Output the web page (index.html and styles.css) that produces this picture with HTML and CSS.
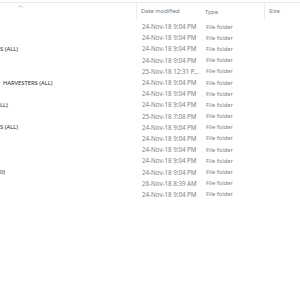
FILE: index.html
```html
<!DOCTYPE html>
<html>
<head>
<meta charset="utf-8">
<link rel="stylesheet" href="styles.css">
</head>
<body>
<div class="explorer">
  <div class="header">
    <div class="hcell name-h"><span class="sort">
      <svg width="5" height="3" viewBox="0 0 5 3"><path d="M0.5 2.6 L2.5 0.6 L4.5 2.6" fill="none" stroke="#9aa0a8" stroke-width="0.7"/></svg>
    </span></div>
    <div class="hcell sep">Date modified</div>
    <div class="hcell">Type</div>
    <div class="hcell sep">Size</div>
  </div>
  <div class="rows">
    <div class="row"><div class="name"></div><div class="date">24-Nov-18 9:04 PM</div><div class="type">File folder</div><div class="size"></div></div>
    <div class="row"><div class="name"></div><div class="date">24-Nov-18 9:04 PM</div><div class="type">File folder</div><div class="size"></div></div>
    <div class="row"><div class="name">S (ALL)</div><div class="date">24-Nov-18 9:04 PM</div><div class="type">File folder</div><div class="size"></div></div>
    <div class="row"><div class="name"></div><div class="date">24-Nov-18 9:04 PM</div><div class="type">File folder</div><div class="size"></div></div>
    <div class="row"><div class="name"></div><div class="date">25-Nov-18 12:31 P...</div><div class="type">File folder</div><div class="size"></div></div>
    <div class="row"><div class="name indent">HARVESTERS (ALL)</div><div class="date">24-Nov-18 9:04 PM</div><div class="type">File folder</div><div class="size"></div></div>
    <div class="row"><div class="name"></div><div class="date">24-Nov-18 9:04 PM</div><div class="type">File folder</div><div class="size"></div></div>
    <div class="row"><div class="name">LL)</div><div class="date">24-Nov-18 9:04 PM</div><div class="type">File folder</div><div class="size"></div></div>
    <div class="row"><div class="name"></div><div class="date">25-Nov-18 7:08 PM</div><div class="type">File folder</div><div class="size"></div></div>
    <div class="row"><div class="name">S (ALL)</div><div class="date">24-Nov-18 9:04 PM</div><div class="type">File folder</div><div class="size"></div></div>
    <div class="row"><div class="name"></div><div class="date">24-Nov-18 9:04 PM</div><div class="type">File folder</div><div class="size"></div></div>
    <div class="row"><div class="name"></div><div class="date">24-Nov-18 9:04 PM</div><div class="type">File folder</div><div class="size"></div></div>
    <div class="row"><div class="name"></div><div class="date">24-Nov-18 9:04 PM</div><div class="type">File folder</div><div class="size"></div></div>
    <div class="row"><div class="name">0)</div><div class="date">24-Nov-18 9:04 PM</div><div class="type">File folder</div><div class="size"></div></div>
    <div class="row"><div class="name"></div><div class="date">26-Nov-18 8:39 AM</div><div class="type">File folder</div><div class="size"></div></div>
    <div class="row"><div class="name"></div><div class="date">24-Nov-18 9:04 PM</div><div class="type">File folder</div><div class="size"></div></div>
  </div>
</div>
</body>
</html>
```

FILE: styles.css
```css
html, body {
  margin: 0;
  padding: 0;
  background: #ffffff;
}
.explorer {
  width: 300px;
  height: 300px;
  overflow: hidden;
  background: #ffffff;
  font-family: "Noto Sans", "Open Sans", sans-serif;
  font-size: 5.8px;
  padding-top: 2px;
  box-sizing: border-box;
}
.header {
  display: grid;
  grid-template-columns: 136px 64px 64px 36px;
  height: 19px;
  border-top: 1px solid #e6e6e6;
  box-sizing: border-box;
}
.hcell {
  display: flex;
  align-items: center;
  padding-left: 5px;
  color: #6e7784;
  white-space: nowrap;
}
.hcell.sep {
  border-left: 1px solid #ececec;
  padding-left: 4px;
  margin-bottom: 2px;
}
.name-h {
  align-items: flex-start;
  padding-left: 18px;
}
.sort {
  display: block;
  height: 3px;
  padding-top: 2px;
}
.sort svg {
  display: block;
}
.rows {
  display: flex;
  flex-direction: column;
}
.row {
  display: grid;
  grid-template-columns: 136px 64px 64px 36px;
  height: 11.2px;
  align-items: center;
  white-space: nowrap;
}
.name {
  color: #262626;
  overflow: hidden;
  font-size: 5.8px;
}
.name.indent {
  padding-left: 3px;
}
.date {
  color: #808080;
  padding-left: 6px;
  font-size: 6.2px;
}
.type {
  color: #808080;
  padding-left: 6px;
}
```
